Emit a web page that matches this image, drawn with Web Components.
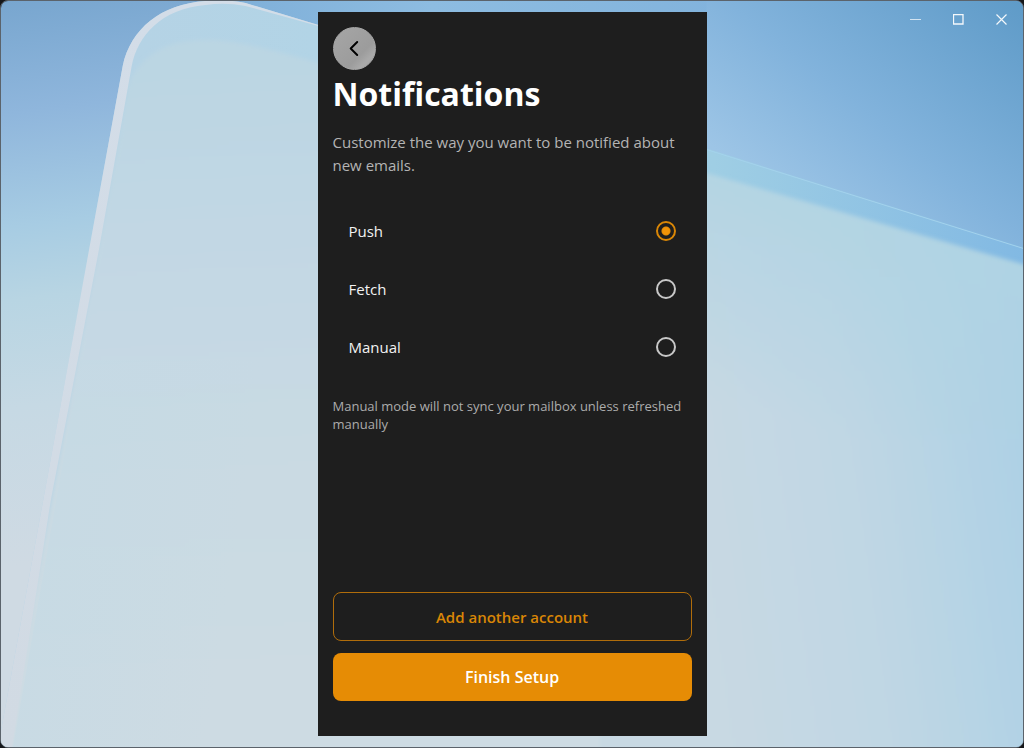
<!DOCTYPE html>
<html lang="en">
  <head>
    <meta charset="UTF-8" />
    <meta name="viewport" content="width=device-width, initial-scale=1" />
    <title>Notifications</title>
    <style>
      html {
        background: #15171a;
      }
      body {
        margin: 0;
        font-family: "Segoe UI", "Open Sans", "Noto Sans", sans-serif;
      }
    </style>
    <script>
      // Attach an open shadow root holding the given markup
      const render = (el, html) => {
        el.attachShadow({ mode: "open" }).innerHTML = `
          <style>*, :host { box-sizing: border-box; }</style>
          ${html}
        `;
        return el.shadowRoot;
      };

      customElements.define(
        "glass-wallpaper",
        class extends HTMLElement {
          constructor() {
            super();
            render(
              this,
              `
          <style>
            :host { display: block; overflow: hidden; }
            svg { display: block; width: 100%; height: 100%; }
          </style>
          <svg viewBox="0 0 1024 748" preserveAspectRatio="none" aria-hidden="true">
            <defs>
              <linearGradient id="sky" gradientUnits="userSpaceOnUse" x1="0" y1="0" x2="70" y2="560">
                <stop offset="0" stop-color="#78a6cf" />
                <stop offset=".2" stop-color="#8fb6dc" />
                <stop offset=".4" stop-color="#a7cce3" />
                <stop offset=".53" stop-color="#b8d5e3" />
                <stop offset=".72" stop-color="#c6d9e4" />
                <stop offset="1" stop-color="#cfdae3" />
              </linearGradient>
              <linearGradient id="skyRight" gradientUnits="userSpaceOnUse" x1="730" y1="160" x2="920" y2="-79">
                <stop offset="0" stop-color="#9dc5e6" />
                <stop offset=".4" stop-color="#82b3dc" />
                <stop offset="1" stop-color="#5f9bc8" />
              </linearGradient>
              <linearGradient id="topBar" gradientUnits="userSpaceOnUse" x1="240" y1="0" x2="720" y2="0">
                <stop offset="0" stop-color="#80b0d9" />
                <stop offset=".4" stop-color="#8dbce1" />
                <stop offset="1" stop-color="#82b3dc" />
              </linearGradient>
              <linearGradient id="band" gradientUnits="userSpaceOnUse" x1="140" y1="0" x2="1024" y2="0">
                <stop offset="0" stop-color="#b5d3e5" />
                <stop offset=".2" stop-color="#b2d4e6" />
                <stop offset=".65" stop-color="#9fcee4" />
                <stop offset="1" stop-color="#82b9e3" />
              </linearGradient>
              <linearGradient id="pane" gradientUnits="userSpaceOnUse" x1="230" y1="60" x2="260" y2="700">
                <stop offset="0" stop-color="#bbd6e3" />
                <stop offset=".35" stop-color="#c4d8e4" />
                <stop offset=".6" stop-color="#c9dae3" />
                <stop offset="1" stop-color="#cddbe3" />
              </linearGradient>
              <linearGradient id="paneRight" gradientUnits="userSpaceOnUse" x1="690" y1="500" x2="1050" y2="450">
                <stop offset="0" stop-color="#c8d9e3" />
                <stop offset=".45" stop-color="#c0d7e4" />
                <stop offset="1" stop-color="#abd0e5" />
              </linearGradient>
              <linearGradient id="paneTop" gradientUnits="userSpaceOnUse" x1="800" y1="200" x2="740" y2="410">
                <stop offset="0" stop-color="#b0d4e3" stop-opacity=".8" />
                <stop offset="1" stop-color="#b0d4e3" stop-opacity="0" />
              </linearGradient>
              <linearGradient id="leftShade" gradientUnits="userSpaceOnUse" x1="40" y1="560" x2="230" y2="590">
                <stop offset="0" stop-color="#c4dae5" />
                <stop offset="1" stop-color="#c4dae5" stop-opacity="0" />
              </linearGradient>
              <linearGradient id="rim" gradientUnits="userSpaceOnUse" x1="0" y1="0" x2="0" y2="748">
                <stop offset="0" stop-color="#d3dde8" />
                <stop offset="1" stop-color="#d1dae3" />
              </linearGradient>
              <filter id="soft" x="-5%" y="-5%" width="110%" height="110%">
                <feGaussianBlur stdDeviation="2" />
              </filter>
            </defs>
            <rect width="1024" height="748" fill="url(#sky)" />
            <rect x="520" width="504" height="300" fill="url(#skyRight)" />
            <rect x="230" width="477" height="30" fill="url(#topBar)" />
            <path d="M-3 748 L122 65 C130 28 160 3 205 0 Q225-2 245 2 L318 24 L707 148 L1024 247 V748 Z" fill="url(#band)" />
            <g filter="url(#soft)">
              <path d="M2 760 L128 82 C142 54 165 39 205 39 Q235 38 318 62 L707 173 L1030 266 V760 Z" fill="url(#pane)" />
              <path d="M600 142 L707 173 L1030 266 V760 H600 Z" fill="url(#paneRight)" />
              <path d="M600 142 L707 173 L1030 266 V440 H600 Z" fill="url(#paneTop)" />
            </g>
            <path d="M12 748 L80 360 H318 V748 Z" fill="url(#leftShade)" opacity=".5" />
            <path d="M-3 748 L122 65 C130 28 160 3 205 0 Q225-2 245 2 L318 24 L318 25 L245 5 Q225 1 205 4 C160 8 137 35 131 65 L98 250 L50 500 L11 748 Z" fill="url(#rim)" />
            <path d="M707 149 L1024 248" fill="none" stroke="#a4d2ec" stroke-width="1" />
          </svg>
        `
            );
          }
        }
      );

      customElements.define(
        "window-controls",
        class extends HTMLElement {
          constructor() {
            super();
            render(
              this,
              `
          <style>
            :host { display: flex; justify-content: flex-end; }
            button {
              display: grid;
              place-items: center;
              width: 43px;
              height: 36px;
              padding: 0;
              border: 0;
              background: none;
              color: #f4f8fb;
            }
            button:hover { background: rgb(255 255 255 / 0.15); }
            svg { display: block; width: 11px; height: 11px; fill: none; stroke: currentColor; }
          </style>
          <button aria-label="Minimize"><svg viewBox="0 0 11 11"><path d="M0 5.5H11" opacity=".75" /></svg></button>
          <button aria-label="Maximize"><svg viewBox="0 0 11 11"><path d="M.5 .5H10V10H.5Z" stroke-width="1.3" /></svg></button>
          <button aria-label="Close"><svg viewBox="0 0 11 11"><path d="M.5 .5L10.5 10.5M10.5 .5L.5 10.5" stroke-width="1.2" /></svg></button>
        `
            );
          }
        }
      );

      customElements.define(
        "app-window",
        class extends HTMLElement {
          constructor() {
            super();
            render(
              this,
              `
          <style>
            :host {
              display: flex;
              justify-content: center;
              position: relative;
              min-height: 100vh;
              padding: 11px;
              border: 1px solid #5b636b;
              border-radius: 8px;
              overflow: hidden;
            }
            glass-wallpaper { position: absolute; inset: 0; }
            window-controls { position: absolute; top: 0; right: 0; }
          </style>
          <glass-wallpaper></glass-wallpaper>
          <slot></slot>
          <window-controls></window-controls>
        `
            );
          }
        }
      );

      customElements.define(
        "back-button",
        class extends HTMLElement {
          constructor() {
            super();
            render(
              this,
              `
          <style>
            :host { display: flex; }
            button {
              display: grid;
              place-items: center;
              width: 43px;
              height: 43px;
              padding: 0;
              border: 1px solid #a8a8a8;
              border-radius: 50%;
              background: linear-gradient(135deg, #a6a6a6, #9c9c9c 65%, #aaaaaa 80%, #a2a2a2);
              color: #000;
            }
            svg { display: block; width: 18px; height: 18px; }
          </style>
          <button aria-label="Back">
            <svg viewBox="0 0 18 18" fill="none" stroke="currentColor" stroke-width="2" stroke-linecap="round" stroke-linejoin="round">
              <path d="M12.2 2L5.7 8.5L12.2 15" />
            </svg>
          </button>
        `
            );
          }
        }
      );

      customElements.define(
        "setup-panel",
        class extends HTMLElement {
          constructor() {
            super();
            render(
              this,
              `
          <style>
            :host {
              display: flex;
              flex-direction: column;
              position: relative;
              width: 100%;
              max-width: 389px;
              padding: 15px 15px 35px;
              background: #1e1e1e;
              color: #fff;
            }
            h1 { margin: 0; font-size: 32px; line-height: 48px; font-weight: 700; }
            .intro { margin: 13px 0 25px; font-size: 15px; line-height: 23px; color: #b4b4b4; }
            .note { margin: 21px 0 24px; font-size: 13px; line-height: 18px; color: #acacac; }
            .actions { display: grid; gap: 12px; margin-top: auto; }
          </style>
          <back-button></back-button>
          <h1><slot name="title"></slot></h1>
          <p class="intro"><slot name="intro"></slot></p>
          <slot></slot>
          <p class="note"><slot name="note"></slot></p>
          <div class="actions"><slot name="actions"></slot></div>
        `
            );
          }
        }
      );

      customElements.define(
        "radio-list",
        class extends HTMLElement {
          connectedCallback() {
            if (this.shadowRoot) return;
            const selected = this.getAttribute("value");
            const rows = this.getAttribute("options")
              .split(",")
              .map(
                (name) => `
            <label for="${name}">
              ${name}
              <input type="radio" name="mode" id="${name}" value="${name}" ${name === selected ? "checked" : ""} />
            </label>`
              )
              .join("");
            render(
              this,
              `
          <style>
            :host { display: block; }
            div { display: grid; }
            label {
              display: flex;
              align-items: center;
              justify-content: space-between;
              height: 58px;
              padding: 0 16px;
              font-size: 15px;
              font-weight: 500;
              color: #f2f2f2;
            }
            input {
              appearance: none;
              width: 20px;
              height: 20px;
              margin: 0;
              border: 2px solid #c8c8c8;
              border-radius: 50%;
            }
            input:checked {
              border-color: #d98606;
              background: radial-gradient(circle, #f09308 0 3px, #e68c05 4px, transparent 5px);
            }
          </style>
          <div role="radiogroup" aria-label="Notification mode">${rows}</div>
        `
            );
          }
        }
      );

      customElements.define(
        "action-button",
        class extends HTMLElement {
          constructor() {
            super();
            render(
              this,
              `
          <style>
            :host { display: grid; }
            button {
              height: 49px;
              padding: 0 16px;
              border: 1px solid #b06d0b;
              border-radius: 8px;
              background: none;
              color: #d98606;
              font: inherit;
              font-size: 15px;
              font-weight: 600;
            }
            :host([primary]) button {
              height: 48px;
              border: 0;
              background: #e68c05;
              color: #fff;
              font-size: 16px;
            }
          </style>
          <button><slot></slot></button>
        `
            );
          }
        }
      );
    </script>
  </head>
  <body>
    <app-window>
      <setup-panel>
        <span slot="title">Notifications</span>
        <span slot="intro">Customize the way you want to be notified about new emails.</span>
        <radio-list options="Push,Fetch,Manual" value="Push"></radio-list>
        <span slot="note">Manual mode will not sync your mailbox unless refreshed manually</span>
        <action-button slot="actions">Add another account</action-button>
        <action-button slot="actions" primary>Finish Setup</action-button>
      </setup-panel>
    </app-window>
  </body>
</html>
